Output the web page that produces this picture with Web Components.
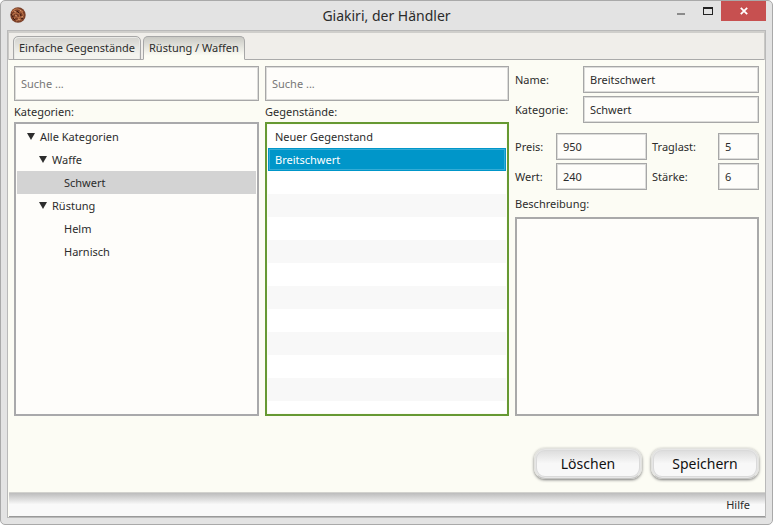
<!DOCTYPE html>
<html lang="de">
<head>
<meta charset="utf-8">
<title>Giakiri, der Händler</title>
<style>
html, body { height: 100%; }
body { margin: 0; background: #fff; font: 11px/16px "Noto Sans", "Open Sans", sans-serif; color: #2c2c2c; }
</style>
</head>
<body>
<app-window>
  <tab-bar slot="tabs">
    <tab-item>Einfache Gegenstände</tab-item>
    <tab-item active>Rüstung / Waffen</tab-item>
  </tab-bar>
  <list-column placeholder="Suche ..." heading="Kategorien:">
    <tree-view>
      <tree-node open>Alle Kategorien</tree-node>
      <tree-node open level="1">Waffe</tree-node>
      <tree-node level="2" selected>Schwert</tree-node>
      <tree-node open level="1">Rüstung</tree-node>
      <tree-node level="2">Helm</tree-node>
      <tree-node level="2">Harnisch</tree-node>
    </tree-view>
  </list-column>
  <list-column placeholder="Suche ..." heading="Gegenstände:">
    <item-list>
      <item-row>Neuer Gegenstand</item-row>
      <item-row selected>Breitschwert</item-row>
    </item-list>
  </list-column>
  <item-form></item-form>
  <push-button slot="actions">Löschen</push-button>
  <push-button slot="actions">Speichern</push-button>
  <status-bar slot="status">Hilfe</status-bar>
</app-window>
<script>
const define = (name, html, setup) => customElements.define(name, class extends HTMLElement {
  constructor() {
    super();
    this.attachShadow({ mode: "open" }).innerHTML = "<style>*{box-sizing:border-box}:host{box-sizing:border-box}</style>" + html;
  }
  connectedCallback() { if (setup) setup(this, this.shadowRoot); }
});

define("window-icon", `<style>:host{display:block;width:16px;height:16px}svg{display:block}</style>
<svg width="16" height="16" viewBox="0 0 16 16" aria-hidden="true">
<circle cx="8" cy="8" r="7.7" fill="#7a3f28"/>
<path d="M2 5q3-4 6-3t5 3M2 9q2-4 5-3t3 3-2 3M4 12q1-3 3-2t5 1M9 5q3-1 4 2t-2 3M6 14q3-2 6-1" fill="none" stroke="#b87047" stroke-width="1.2"/>
<path d="M4 4l2 1M10 3l1 1M5 8l2 1M12 9l1 2M8 12l2 1" stroke="#d99a70" stroke-width="1"/>
<path d="M1 7l2 3M7 4l2 2M10 7l1 2M3 11l2 2M11 12l2-1" stroke="#3c1a10" stroke-width="1"/>
</svg>`);

define("title-bar", `<style>
:host{display:grid;grid-template-columns:1fr auto 1fr;height:29px}
window-icon{margin:6px 0 0 9px}
h1{margin:0;font-size:14px;font-weight:400;line-height:29px;color:#2b2b2b}
.controls{display:flex;justify-content:flex-end;margin-right:6px}
button{border:0;padding:0;background:none;width:27px;height:20px}
.close{background:#c75050;width:45px}
svg{display:block;margin:auto}
</style>
<window-icon></window-icon><h1><slot></slot></h1>
<div class="controls">
<button aria-label="Minimieren"><svg width="10" height="12"><path d="M1 8h8v2H1z" fill="#8b8b8b"/></svg></button>
<button aria-label="Maximieren"><svg width="10" height="8"><path d="M0 0h10v8H0zM1 2v5h8V2z" fill="#222" fill-rule="evenodd"/></svg></button>
<button class="close" aria-label="Schließen"><svg width="8" height="8"><path d="M.8.8l6.4 6.4M7.2.8L.8 7.2" stroke="#fff" stroke-width="1.8"/></svg></button>
</div>`);

define("app-window", `<style>
:host{display:flex;flex-direction:column;height:100vh;background:#e3e3e3;border:1px solid #a9a9a9;border-radius:5px;overflow:hidden}
.client{flex:1;display:flex;flex-direction:column;min-height:0;margin:0 6px 6px;border:1px solid #b9b9b9;background:#fcfcf4}
main{flex:1;min-height:0;display:grid;grid-template-columns:minmax(0,245fr) minmax(0,244fr) minmax(0,244fr);gap:6px;padding:6px 6px 0}
footer{display:flex;justify-content:flex-end;gap:9px;padding:32px 6px 13px}
</style>
<title-bar>Giakiri, der Händler</title-bar>
<div class="client"><slot name="tabs"></slot><main><slot></slot></main>
<footer><slot name="actions"></slot></footer><slot name="status"></slot></div>`);

define("tab-bar", `<style>
:host{display:flex;align-items:flex-end;gap:2px;height:29px;padding:0 4px;background:#f0eeea;border:1px solid #c9c8c5;border-top:2px solid #cfcecb;box-shadow:inset 0 -1px #aaa;border-bottom:0}
</style><slot></slot>`, el => el.setAttribute("role", "tablist"));

define("tab-item", `<style>
:host{display:block}
button{display:block;font:inherit;color:inherit;height:24px;padding:0 5px;border:1px solid #a7a7a7;border-radius:5px 5px 0 0;background:linear-gradient(#d2d1cd,#f4f4ef 80%);box-shadow:inset 1px 1px #e9e9e6,inset -1px 0 #e9e9e6;white-space:nowrap}
:host([active]) button{border-bottom-color:#fcfcf4;background:linear-gradient(#c9c9c4,#fcfcf4 85%);box-shadow:none}
</style><button role="tab"><slot></slot></button>`,
(el, root) => root.querySelector("button").setAttribute("aria-selected", el.hasAttribute("active")));

define("list-column", `<style>
:host{display:flex;flex-direction:column;min-height:0;min-width:0}
input{width:100%;height:35px;flex:none;font:inherit;color:inherit;padding:0 6px;background:#fefdfa;border:1px solid #a7a7a7;box-shadow:inset 0 0 0 1px #dcdcda;border-radius:0;outline:0}
input::placeholder{color:#777;opacity:1}
h2{margin:0;font-size:11px;font-weight:400;line-height:21px}
</style><input type="search"><h2></h2><slot></slot>`,
(el, root) => {
  const input = root.querySelector("input");
  input.placeholder = el.getAttribute("placeholder");
  input.setAttribute("aria-label", el.getAttribute("heading") + " Suche");
  root.querySelector("h2").textContent = el.getAttribute("heading");
});

define("tree-view", `<style>
:host{display:block;flex:1;min-height:0;overflow:hidden;padding:1px;border:2px solid #a9a9ab;background:#fefdfa}
</style><slot></slot>`, el => el.setAttribute("role", "tree"));

define("tree-node", `<style>
:host{display:flex;align-items:center;height:23px;padding-left:10px}
:host([level="1"]){padding-left:22px}
:host([level="2"]){padding-left:34px}
:host([selected]){background:#d3d3d3}
svg{width:8px;margin-right:5px;visibility:hidden}
:host([open]) svg{visibility:visible}
</style><svg height="8" viewBox="0 0 8 8" aria-hidden="true"><path d="M0 0h8L4 7z" fill="#2d2d2d"/></svg><slot></slot>`,
el => el.setAttribute("role", "treeitem"));

define("item-list", `<style>
:host{display:block;flex:1;min-height:0;overflow:hidden;padding:1px;border:2px solid #669933;background:repeating-linear-gradient(#fff 0 23px,#f8f8f8 23px 46px) content-box #fff}
</style><slot></slot>`, el => el.setAttribute("role", "listbox"));

define("item-row", `<style>
:host{display:block;height:23px;padding:0 7px;line-height:23px}
:host([selected]){background:#0096c9;color:#fff;border:1px solid #0096c9;padding:0 6px;line-height:21px;box-shadow:inset 0 0 0 1px #35acd6}
</style><slot></slot>`, el => el.setAttribute("role", "option"));

define("text-field", `<style>
:host{display:grid;grid-template-columns:var(--label-width) minmax(0,1fr);align-items:center}
input{width:100%;height:27px;font:inherit;color:inherit;padding:0 6px;background:#fefdfa;border:1px solid #a7a7a7;box-shadow:inset 0 0 0 1px #dcdcda;border-radius:0;outline:0}
</style><label for="f"></label><input id="f" type="text">`,
(el, root) => {
  root.querySelector("label").textContent = el.getAttribute("label");
  root.querySelector("input").value = el.getAttribute("value");
});

define("item-form", `<style>
:host{display:flex;flex-direction:column;min-width:0;min-height:0}
.head,.stats{display:grid;gap:3px 5px}
.head{--label-width:68px}
.stats{grid-template-columns:minmax(0,1fr) 107px;margin-top:10px}
.left{--label-width:41px}
.right{--label-width:66px}
label{line-height:27px}
textarea{flex:1;min-height:0;width:100%;font:inherit;color:inherit;resize:none;border:2px solid #a9a9a9;background:#fefdfa;border-radius:0;outline:0}
</style>
<div class="head"><text-field label="Name:" value="Breitschwert"></text-field><text-field label="Kategorie:" value="Schwert"></text-field></div>
<div class="stats">
<text-field class="left" label="Preis:" value="950"></text-field><text-field class="right" label="Traglast:" value="5"></text-field>
<text-field class="left" label="Wert:" value="240"></text-field><text-field class="right" label="Stärke:" value="6"></text-field>
</div>
<label for="d">Beschreibung:</label><textarea id="d"></textarea>`);

define("push-button", `<style>
:host{display:block}
button{display:block;min-width:108px;height:31px;padding:0 16px;font:inherit;font-size:14px;color:#111;border:1px solid #e2e2de;border-bottom-color:#c4c4c2;border-radius:11px;background:linear-gradient(#dadada,#f8f8f8 50%);box-shadow:inset 0 0 0 1px #e6e6e6,inset 0 0 0 2px #dadada,0 1px 3px #777}
</style><button type="button"><slot></slot></button>`);

define("status-bar", `<style>
:host{display:flex;justify-content:flex-end;height:25px;padding:0 15px;margin-left:1px;border-top:1px solid #d2d2ce;border-bottom:1px solid #999;background:linear-gradient(#bcbcbc,#f9f9f9 50%)}
button{font:inherit;color:inherit;border:0;padding:0;background:none}
</style><button type="button"><slot></slot></button>`);
</script>
</body>
</html>
